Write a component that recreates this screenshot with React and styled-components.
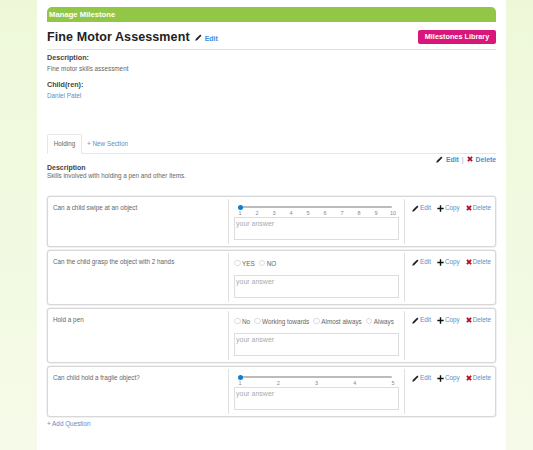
import styled, { createGlobalStyle } from "styled-components";

const GlobalStyle = createGlobalStyle`
  html, body {
    margin: 0;
    padding: 0;
    background: linear-gradient(#eef8d9, #f6fbe9 450px);
  }
  body {
    font-family: "Liberation Sans", Arial, sans-serif;
    color: #555;
  }
`;

const PencilIcon = ({ size = 7 }) => (
  <svg width={size} height={size} viewBox="0 0 10 10">
    <path d="M0.5 9.5 L1 7 L7.5 0.8 L9.2 2.5 L3 9 Z" fill="#222" />
  </svg>
);

const PlusIcon = () => (
  <svg width="7" height="7" viewBox="0 0 10 10">
    <path d="M4 0.5 H6 V4 H9.5 V6 H6 V9.5 H4 V6 H0.5 V4 H4 Z" fill="#111" />
  </svg>
);

const CrossIcon = () => (
  <svg width="6" height="6" viewBox="0 0 10 10">
    <path d="M1.5 1.5 L8.5 8.5 M8.5 1.5 L1.5 8.5" stroke="#b3101c" strokeWidth="3" />
  </svg>
);

const Page = styled.div`
  width: 469px;
  height: 450px;
  margin-left: 37px;
  padding: 7px 10px 0;
  box-sizing: border-box;
  background: #fff;
  overflow: hidden;
`;

const TitleBar = styled.div`
  height: 15px;
  padding-left: 2px;
  background: #92c647;
  border-radius: 5px 5px 0 0;
  color: #fff;
  font-size: 7.7px;
  font-weight: bold;
  line-height: 15px;
`;

const HeadRow = styled.div`
  height: 28px;
  padding-top: 3px;
  box-sizing: border-box;
  display: flex;
  align-items: center;
  border-bottom: 1px solid #e2e2e2;
`;

const Title = styled.h1`
  margin: 0 5px 0 0;
  color: #222;
  font-size: 12.5px;
  letter-spacing: 0.1px;
  font-weight: bold;
`;

const HeadEdit = styled.a`
  margin: 2px 0 0 3px;
  color: #3a8fdc;
  font-size: 7px;
  font-weight: bold;
`;

const LibraryButton = styled.a`
  margin-left: auto;
  width: 78px;
  height: 14px;
  background: #d9177b;
  border-radius: 2px;
  color: #fff;
  font-size: 7.3px;
  font-weight: bold;
  line-height: 14px;
  text-align: center;
`;

const Label = styled.div`
  margin-top: ${(p) => p.$top}px;
  color: #444;
  font-size: 7.2px;
  font-weight: bold;
  line-height: 10px;
`;

const Small = styled.div`
  margin-top: 1px;
  color: ${(p) => p.$color || "#666"};
  font-size: 6.35px;
  line-height: 9px;
`;

const Tabs = styled.div`
  margin-top: 34px;
  height: 20px;
  box-sizing: border-box;
  display: flex;
  border-bottom: 1px solid #e6e6e6;
`;

const Tab = styled.div`
  width: 35px;
  height: 20px;
  box-sizing: border-box;
  border: 1px solid #e6e6e6;
  border-bottom: 1px solid #fff;
  border-radius: 2px 2px 0 0;
  color: #666;
  font-size: 6.35px;
  line-height: 18px;
  text-align: center;
`;

const NewSection = styled.a`
  margin-left: 5px;
  color: #5a8fcb;
  font-size: 6.35px;
  line-height: 19px;
`;

const SectionHead = styled.div`
  display: flex;
  justify-content: flex-end;
  align-items: center;
  gap: 3px;
  height: 10px;
  color: #3a8fdc;
  font-size: 6.8px;
  font-weight: bold;
`;

const Sep = styled.span`
  font-weight: normal;
  color: #7aa7d6;
`;

const DescTitle = styled.div`
  color: #444;
  font-size: 7px;
  font-weight: bold;
  line-height: 8px;
`;

const DescText = styled.div`
  margin-bottom: 16px;
  color: #666;
  font-size: 6.3px;
  line-height: 8px;
`;

const Card = styled.div`
  height: ${(p) => p.$height}px;
  margin-bottom: 3px;
  padding: 2px 0;
  box-sizing: border-box;
  display: grid;
  grid-template-columns: 180px 177px 1fr;
  background: #fff;
  border: 1px solid #d8d8d8;
  border-radius: 3px;
  box-shadow: 0 0 0 0.5px #e4e4e4;
`;

const Question = styled.div`
  padding: 5px 5px;
  color: #666;
  font-size: 6.35px;
  line-height: 8px;
`;

const AnswerCell = styled.div`
  padding: 0 5px;
  border-left: 1px solid #e0e0e0;
  border-right: 1px solid #e0e0e0;
`;

const SliderBox = styled.div`
  height: 18px;
  padding: 7px 0 0 6px;
  box-sizing: border-box;
  display: flex;
  flex-direction: column;
  gap: 2px;
`;

const Track = styled.div`
  position: relative;
  flex: none;
  width: 152px;
  height: 2px;
  background: #bbb;
  border-radius: 1px;
`;

const Thumb = styled.span`
  position: absolute;
  left: -2px;
  top: -1.5px;
  width: 5px;
  height: 5px;
  background: #0d7fd0;
  border-radius: 50%;
`;

const Ticks = styled.div`
  display: flex;
  justify-content: space-between;
  width: 153px;
  color: #888;
  font-size: 5.5px;
  line-height: 6px;
`;

const Tick = styled.span`
  width: 0;
  display: flex;
  justify-content: center;
`;

const Options = styled.div`
  height: 22px;
  padding-bottom: 2px;
  box-sizing: border-box;
  display: flex;
  align-items: center;
  gap: 4px;
  color: #666;
  font-size: 6.35px;
  white-space: nowrap;
`;

const Option = styled.span`
  display: flex;
  align-items: center;
  gap: 1.5px;
`;

const Radio = styled.i`
  width: 4.5px;
  height: 4.5px;
  border: 1px solid #ddd;
  border-radius: 50%;
`;

const AnswerBox = styled.div`
  height: 23px;
  padding: 2px 1px;
  box-sizing: border-box;
  border: 1px solid #ddd;
  color: #aaa;
  font-size: 7px;
  line-height: 8px;
`;

const Actions = styled.div`
  display: flex;
  gap: 6px;
  padding: 5px 0 0 7px;
  color: #5a8fcb;
  font-size: 6.35px;
`;

const Action = styled.a`
  display: flex;
  align-items: center;
  gap: 1px;
  height: 8px;
  line-height: 8px;
`;

const AddQuestion = styled.a`
  display: block;
  color: #5a8fcb;
  font-size: 6.35px;
  line-height: 8px;
`;

const Slider = ({ max }) => (
  <SliderBox>
    <Track>
      <Thumb />
    </Track>
    <Ticks>
      {Array.from({ length: max }, (_, i) => (
        <Tick key={i}>{i + 1}</Tick>
      ))}
    </Ticks>
  </SliderBox>
);

const questions = [
  { text: "Can a child swipe at an object", slider: 10, height: 51 },
  { text: "Can the child grasp the object with 2 hands", options: ["YES", "NO"], height: 55 },
  { text: "Hold a pen", options: ["No", "Working towards", "Almost always", "Always"], height: 55 },
  { text: "Can child hold a fragile object?", slider: 5, height: 51 },
];

const App = () => (
  <Page>
    <GlobalStyle />
    <TitleBar>Manage Milestone</TitleBar>
    <HeadRow>
      <Title>Fine Motor Assessment</Title>
      <PencilIcon />
      <HeadEdit>Edit</HeadEdit>
      <LibraryButton>Milestones Library</LibraryButton>
    </HeadRow>
    <Label $top={3}>Description:</Label>
    <Small>Fine motor skills assessment</Small>
    <Label $top={7}>Child(ren):</Label>
    <Small $color="#5a8fcb">Daniel Patel</Small>
    <Tabs>
      <Tab>Holding</Tab>
      <NewSection>+ New Section</NewSection>
    </Tabs>
    <SectionHead>
      <PencilIcon />
      <span>Edit</span>
      <Sep>|</Sep>
      <CrossIcon />
      <span>Delete</span>
    </SectionHead>
    <DescTitle>Description</DescTitle>
    <DescText>Skills involved with holding a pen and other items.</DescText>
    {questions.map((q) => (
      <Card key={q.text} $height={q.height}>
        <Question>{q.text}</Question>
        <AnswerCell>
          {q.slider ? (
            <Slider max={q.slider} />
          ) : (
            <Options>
              {q.options.map((o) => (
                <Option key={o}>
                  <Radio />
                  {o}
                </Option>
              ))}
            </Options>
          )}
          <AnswerBox>your answer</AnswerBox>
        </AnswerCell>
        <Actions>
          <Action><PencilIcon />Edit</Action>
          <Action><PlusIcon />Copy</Action>
          <Action><CrossIcon />Delete</Action>
        </Actions>
      </Card>
    ))}
    <AddQuestion>+ Add Question</AddQuestion>
  </Page>
);

export default App;
